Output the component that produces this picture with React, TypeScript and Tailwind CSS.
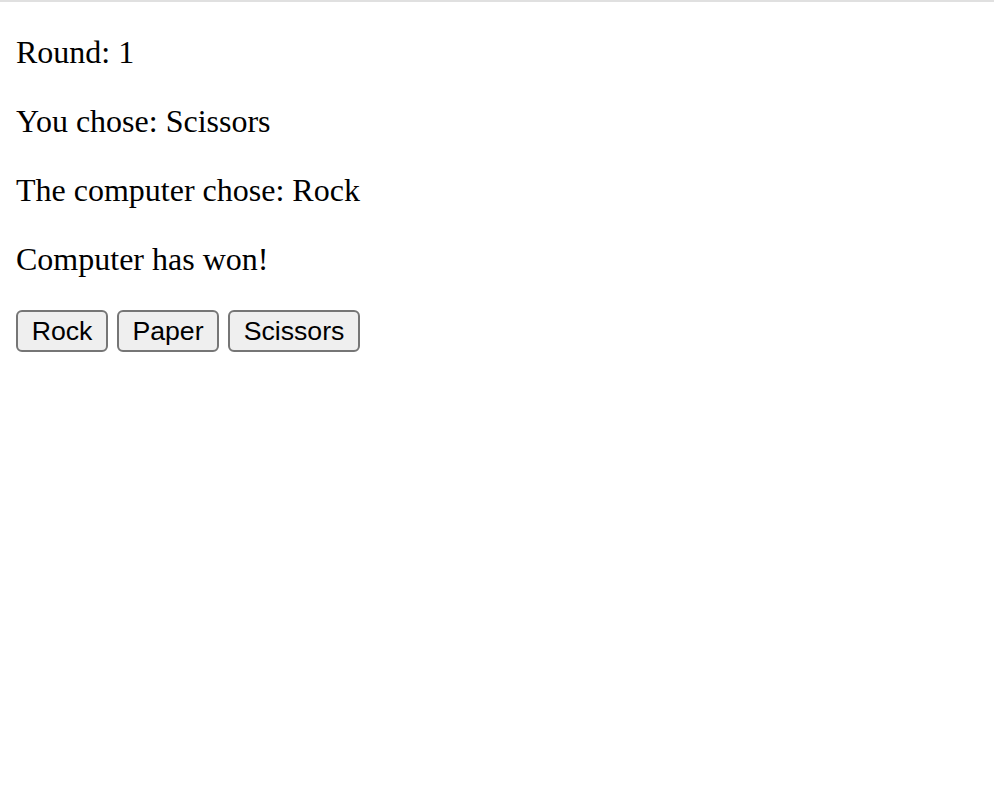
const choices = [
  { label: "Rock", width: "w-[92px]" },
  { label: "Paper", width: "w-[102px]" },
  { label: "Scissors", width: "w-[132px]" },
]

export default function App() {
  return (
    <div className="min-h-screen bg-white text-black">
      <div className="h-[2px] bg-[#e0e0e0]" />
      <div className="px-4 pt-8 font-['Liberation_Serif',serif] text-[32px] leading-[37px]">
        <p className="mb-8">Round: 1</p>
        <p className="mb-8">You chose: Scissors</p>
        <p className="mb-8">The computer chose: Rock</p>
        <p className="mb-8">Computer has won!</p>
        <div className="flex gap-[9px]">
          {choices.map((c) => (
            <button
              key={c.label}
              className={`${c.width} h-[42px] rounded-[6px] border-2 border-[#767676] bg-[#efefef] font-['Liberation_Sans',Arial,sans-serif] text-[26.67px] leading-[30px] text-black`}
            >
              {c.label}
            </button>
          ))}
        </div>
      </div>
    </div>
  )
}
